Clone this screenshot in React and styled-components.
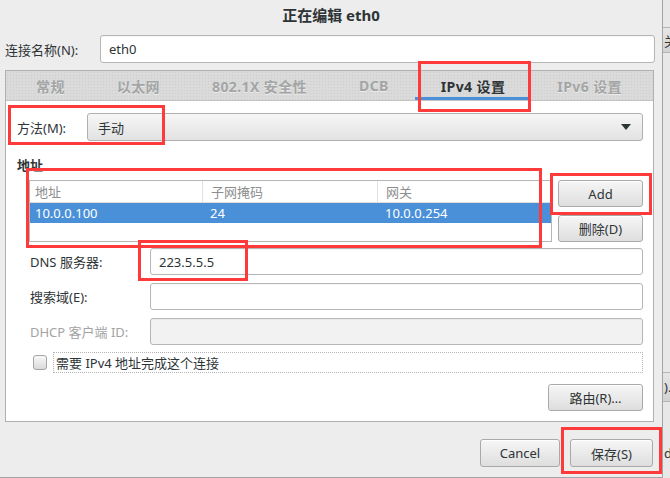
import React from "react";
import styled, { createGlobalStyle } from "styled-components";

const Global = createGlobalStyle`
  html, body { margin: 0; padding: 0; background: #ededed; }
  * { box-sizing: border-box; }
`;

const Screen = styled.div`
  position: relative;
  display: flex;
  width: 670px;
  height: 478px;
  overflow: hidden;
  background: #ededed;
  font-family: "Noto Sans", "Noto Sans CJK SC", sans-serif;
  font-size: 13px;
  color: #2e3436;
`;

const Dialog = styled.div`
  flex: none;
  width: 663px;
  height: 478px;
  display: flex;
  flex-direction: column;
  background: #ededed;
  border-right: 1px solid #a4a4a4;
  border-bottom: 1px solid #a4a4a4;
`;

const BehindStrip = styled.div`
  flex: 1;
  display: flex;
  flex-direction: column;
  overflow: hidden;
  background: #e8e8e8;
  font-size: 13px;
`;

const BehindButton = styled.div`
  height: ${p => p.h}px;
  margin-top: ${p => p.top}px;
  padding-left: 1px;
  background: linear-gradient(#e6e6e6, #d2d2d2);
  border-top: 1px solid #b4b4b4;
  border-bottom: 1px solid #b4b4b4;
  display: flex;
  align-items: center;
  white-space: nowrap;
`;

const BehindText = styled.div`
  margin-top: ${p => p.top}px;
  white-space: nowrap;
  padding-left: 1px;
`;

const TitleBar = styled.div`
  height: 29px;
  display: flex;
  align-items: center;
  justify-content: center;
  font-weight: bold;
  font-size: 15px;
`;

const NameRow = styled.div`
  display: flex;
  align-items: center;
  margin-top: 6px;
  padding: 0 7px 0 5px;
`;

const Label = styled.label`
  flex: none;
  width: ${p => p.w}px;
  color: ${p => (p.disabled ? "#a2a4a4" : "#2e3436")};
  white-space: nowrap;
`;

const TextInput = styled.div`
  flex: 1;
  height: ${p => p.h || 27}px;
  display: flex;
  align-items: center;
  padding-left: 8px;
  border: 1px solid #b6b6b6;
  border-radius: 3px;
  background: ${p => (p.disabled ? "#f2f2f2" : "#ffffff")};
  box-shadow: inset 0 1px 1px rgba(0, 0, 0, 0.04);
`;

const Notebook = styled.div`
  flex: none;
  height: 352px;
  margin: 7px 8px 0 5px;
  border: 1px solid #b0b0b0;
  display: flex;
  flex-direction: column;
  background: #ffffff;
`;

const TabBar = styled.div`
  height: 30px;
  display: flex;
  padding-left: 4px;
  background-color: #dadada;
  background-image: radial-gradient(#cecece 0.6px, transparent 0.8px);
  background-size: 3px 3px;
  border-bottom: 1px solid #c4c4c4;
`;

const Tab = styled.div`
  padding: 0 ${p => p.pad}px;
  display: flex;
  align-items: center;
  justify-content: center;
  white-space: nowrap;
  font-weight: bold;
  font-size: 14px;
  letter-spacing: 0.4px;
  color: ${p => (p.active ? "#2e3436" : "#a3a5a5")};
  text-shadow: ${p => (p.active ? "none" : "0 1px #ececec")};
  box-shadow: ${p => (p.active ? "inset 0 -3px 0 #4a90d9" : "none")};
`;

const Page = styled.div`
  flex: 1;
  display: flex;
  flex-direction: column;
  padding: 12px 10px 0 11px;
`;

const Row = styled.div`
  display: flex;
  align-items: center;
  margin-top: ${p => p.top || 0}px;
  padding-left: ${p => p.indent || 0}px;
`;

const Combo = styled.div`
  flex: 1;
  height: 28px;
  display: flex;
  align-items: center;
  justify-content: space-between;
  padding: 0 11px 0 10px;
  border: 1px solid #b0b0b0;
  border-radius: 3px;
  background: linear-gradient(#f6f6f6, #e2e2e2);
`;

const Arrow = styled.span`
  width: 0;
  height: 0;
  border-left: 5px solid transparent;
  border-right: 5px solid transparent;
  border-top: 6px solid #2e3436;
`;

const SectionLabel = styled.div`
  margin-top: 16px;
  font-weight: bold;
  line-height: 16px;
`;

const AddressArea = styled.div`
  display: flex;
  gap: 6px;
  margin-top: 7px;
  padding-left: 12px;
`;

const Table = styled.div`
  flex: 1;
  height: 62px;
  border: 1px solid #b6b6b6;
  background: #ffffff;
  display: flex;
  flex-direction: column;
`;

const TableRow = styled.div`
  display: grid;
  grid-template-columns: 172px 175px 1fr;
  height: ${p => p.h}px;
  background: ${p => (p.selected ? "#4a90d9" : "transparent")};
  color: ${p => (p.selected ? "#ffffff" : p.header ? "#8c8e8e" : "#2e3436")};
  border-bottom: ${p => (p.header ? "1px solid #dedede" : "none")};
`;

const Cell = styled.div`
  display: flex;
  align-items: center;
  padding-left: ${p => (p.first ? 5 : 8)}px;
  border-left: ${p => (p.sep ? "1px solid #e2e2e2" : "none")};
  white-space: nowrap;
`;

const ButtonColumn = styled.div`
  width: 85px;
  display: flex;
  flex-direction: column;
  gap: 8px;
`;

const Button = styled.button`
  flex: none;
  width: ${p => p.w}px;
  height: ${p => p.h || 27}px;
  padding: 0;
  font: inherit;
  color: #2e3436;
  border: 1px solid #a9a9a9;
  border-radius: 3px;
  background: linear-gradient(#f6f6f6, #dedede);
  box-shadow: inset 0 1px #ffffff;
`;

const Checkbox = styled.span`
  flex: none;
  width: 14px;
  height: 15px;
  margin: 0 6px 0 3px;
  border: 1px solid #a4a4a4;
  border-radius: 3px;
  background: linear-gradient(#f8f8f8, #dadada);
`;

const FocusLabel = styled.div`
  flex: 1;
  height: 21px;
  display: flex;
  align-items: center;
  padding-left: 2px;
  border: 1px dotted #b4b4b4;
`;

const RightRow = styled.div`
  display: flex;
  justify-content: flex-end;
  margin-top: ${p => p.top}px;
`;

const ActionBar = styled.div`
  display: flex;
  justify-content: flex-end;
  gap: 10px;
  margin-top: 17px;
  padding-right: 9px;
`;

const Mark = styled.div`
  position: absolute;
  border: 3px solid #ff3a3a;
  pointer-events: none;
`;

const tabs = [
  { name: "常规" },
  { name: "以太网" },
  { name: "802.1X 安全性" },
  { name: "DCB" },
  { name: "IPv4 设置", active: true },
  { name: "IPv6 设置" },
];

const marks = [
  { x: 418, y: 61, w: 113, h: 51 },
  { x: 8, y: 105, w: 157, h: 40 },
  { x: 26, y: 168, w: 516, h: 80 },
  { x: 550, y: 173, w: 102, h: 42 },
  { x: 138, y: 240, w: 110, h: 41 },
  { x: 561, y: 427, w: 101, h: 47 },
];

export default function App() {
  return (
    <>
      <Global />
      <Screen>
        <Dialog>
          <TitleBar>正在编辑 eth0</TitleBar>
          <NameRow>
            <Label w={95}>连接名称(N):</Label>
            <TextInput h={28}>eth0</TextInput>
          </NameRow>

          <Notebook>
            <TabBar>
              {tabs.map(t => (
                <Tab key={t.name} active={t.active} pad={26}>
                  {t.name}
                </Tab>
              ))}
            </TabBar>

            <Page>
              <Row>
                <Label w={70}>方法(M):</Label>
                <Combo>
                  <span>手动</span>
                  <Arrow />
                </Combo>
              </Row>

              <SectionLabel>地址</SectionLabel>
              <AddressArea>
                <Table>
                  <TableRow header h={22}>
                    <Cell first>地址</Cell>
                    <Cell sep>子网掩码</Cell>
                    <Cell sep>网关</Cell>
                  </TableRow>
                  <TableRow selected h={20}>
                    <Cell first>10.0.0.100</Cell>
                    <Cell>24</Cell>
                    <Cell>10.0.0.254</Cell>
                  </TableRow>
                </Table>
                <ButtonColumn>
                  <Button w={85}>Add</Button>
                  <Button w={85}>删除(D)</Button>
                </ButtonColumn>
              </AddressArea>

              <Row top={6} indent={13}>
                <Label w={120}>DNS 服务器:</Label>
                <TextInput>223.5.5.5</TextInput>
              </Row>
              <Row top={8} indent={13}>
                <Label w={120}>搜索域(E):</Label>
                <TextInput />
              </Row>
              <Row top={8} indent={13}>
                <Label w={120} disabled>DHCP 客户端 ID:</Label>
                <TextInput disabled />
              </Row>
              <Row top={7} indent={13}>
                <Checkbox />
                <FocusLabel>需要 IPv4 地址完成这个连接</FocusLabel>
              </Row>
              <RightRow top={11}>
                <Button w={95}>路由(R)…</Button>
              </RightRow>
            </Page>
          </Notebook>

          <ActionBar>
            <Button w={80} h={28}>Cancel</Button>
            <Button w={83} h={28}>保存(S)</Button>
          </ActionBar>
        </Dialog>

        <BehindStrip>
          <BehindButton top={27} h={26}>关</BehindButton>
          <BehindButton top={319} h={30}>)…</BehindButton>
          <BehindText top={42}>d</BehindText>
        </BehindStrip>

        {marks.map((m, i) => (
          <Mark key={i} style={{ left: m.x, top: m.y, width: m.w, height: m.h }} />
        ))}
      </Screen>
    </>
  );
}
